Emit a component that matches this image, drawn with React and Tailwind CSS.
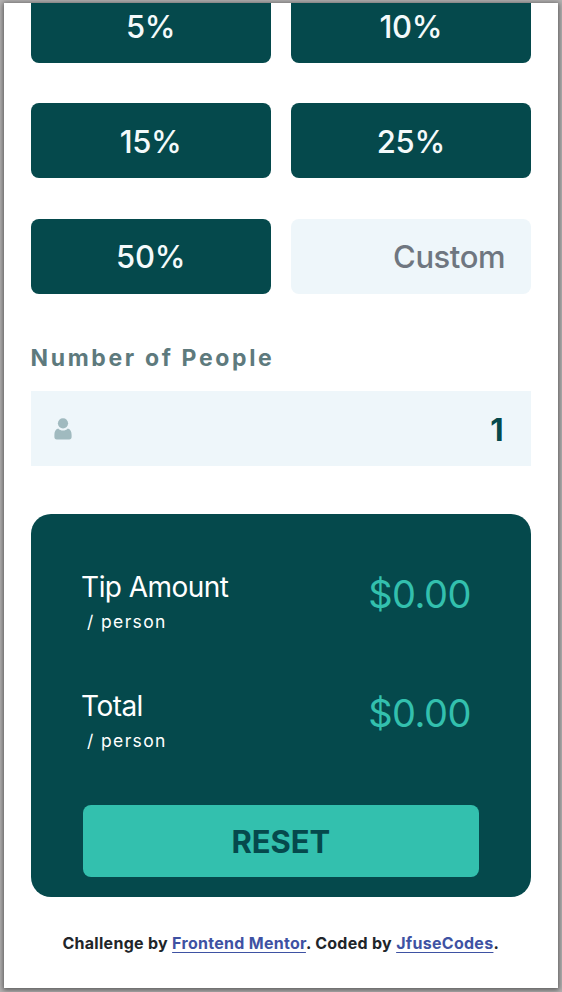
const tips = [
  { label: "5%", offset: "pt-[2px]" },
  { label: "10%", offset: "pt-[2px]" },
  { label: "15%", offset: "pt-[2px]" },
  { label: "25%", offset: "pt-[2px]" },
  { label: "50%", offset: "pt-0" },
];

function TipButton({ label, offset }) {
  return (
    <button
      className={`h-[75px] rounded-lg bg-[#05494c] text-[31px] font-medium leading-none tracking-[-0.3px] text-[#f4fafb] ${offset}`}
    >
      {label}
    </button>
  );
}

function ResultRow({ title }) {
  return (
    <div className="flex h-[119px] items-start justify-between pr-[8px]">
      <div className="-ml-[1.4px]">
        <div className="text-[28px] leading-[36px] tracking-[-0.55px] text-white">{title}</div>
        <div className="mt-[7px] pl-[6px] text-[17.5px] leading-[20px] tracking-[1.35px] text-white">/ person</div>
      </div>
      <div className="mt-[2px] text-[38px] leading-[46px] tracking-[-0.5px] text-[#33c0ae]">$0.00</div>
    </div>
  );
}

export default function App() {
  return (
    <div className="h-[992px] w-[562px] overflow-hidden bg-[#b4b2b2] px-[4px] pb-[4px] pt-[3px] font-[Inter,'Liberation_Sans',sans-serif]">
      <main className="h-[985px] overflow-hidden bg-white pl-[26.5px] pr-[27px] shadow-[0_1px_5px_1px_rgba(0,0,0,0.5)]">
        <div className="-mt-[15px] grid grid-cols-2 gap-x-[20px] gap-y-[40.3px]">
          {tips.map((tip) => (
            <TipButton key={tip.label} {...tip} />
          ))}
          <input
            placeholder="Custom"
            aria-label="Custom tip"
            className="h-[75px] w-full min-w-0 rounded-lg bg-[#eef6fa] pr-[26px] text-right text-[31px] font-medium tracking-[-0.45px] text-[#6c757d] placeholder:text-[#6f7680] outline-none"
          />
        </div>

        <div className="mt-[50.4px] text-[23px] font-bold leading-[28px] tracking-[2.65px] text-[#5e7a7d]">
          Number of People
        </div>
        <div className="mt-[19px] flex h-[75px] items-center justify-between bg-[#eef6fa] pl-[23.5px] pr-[27.5px]">
          <svg className="mt-[1px]" width="18" height="22" viewBox="0 0 18 22" fill="#a0babf">
            <circle cx="9" cy="5.3" r="5.1" />
            <path d="M4.2 10.6C5.5 12 7.1 12.6 9 12.6s3.5-.6 4.8-2C16.4 11.2 17.6 13.6 17.6 16.8v2.2c0 1.6-.8 2.4-2.4 2.4H2.8C1.2 21.4.4 20.6.4 19v-2.2C.4 13.6 1.6 11.2 4.2 10.6Z" />
          </svg>
          <span className="pt-[2px] text-[31px] font-bold leading-none text-[#05494c]">1</span>
        </div>

        <section className="mt-[48px] h-[383px] rounded-[20px] bg-[#05494c] px-[52px] pt-[55px]">
          <ResultRow title="Tip Amount" />
          <ResultRow title="Total" />
          <button className="-mt-[2px] h-[72px] w-full rounded-lg bg-[#33c0ae] pt-[2px] text-[31px] font-bold leading-none tracking-[-0.1px] text-[#05494c]">
            RESET
          </button>
        </section>

        <footer className="mt-[36px] whitespace-nowrap text-center text-[16px] font-bold leading-[20px] tracking-[0.29px] text-[#212529]">
          Challenge by{" "}
          <a className="text-[#3e52a3] underline decoration-1 underline-offset-[3px]">Frontend Mentor</a>. Coded by{" "}
          <a className="text-[#3e52a3] underline decoration-1 underline-offset-[3px]">JfuseCodes</a>.
        </footer>
      </main>
    </div>
  );
}
